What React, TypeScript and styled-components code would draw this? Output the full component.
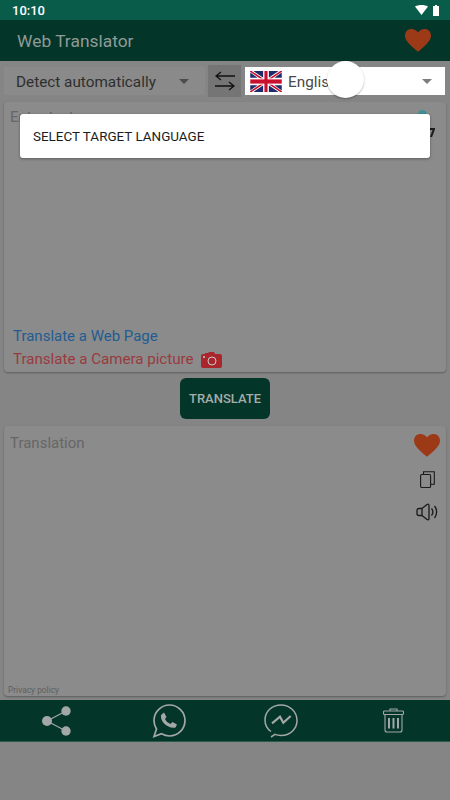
import React from 'react';
import styled, { createGlobalStyle } from 'styled-components';

const GlobalStyle = createGlobalStyle`
  html, body {
    margin: 0;
    padding: 0;
    background-color: #858585;
    font-family: Roboto, "Liberation Sans", sans-serif;
  }
`;

const Screen = styled.div`
  position: relative;
  width: 450px;
  height: 800px;
  overflow: hidden;
  display: flex;
  flex-direction: column;
  background-color: #858585;
`;

const StatusBar = styled.div`
  height: 20px;
  padding: 0 11px 0 12px;
  display: flex;
  justify-content: space-between;
  align-items: center;
  background-color: #0a5c4a;
  color: #fff;
  font-size: 13px;
  font-weight: 500;
`;

const StatusIcons = styled.div`
  display: flex;
  align-items: center;
  gap: 5px;
`;

const AppBar = styled.div`
  height: 41px;
  padding: 0 19px 0 17px;
  display: flex;
  justify-content: space-between;
  align-items: center;
  background-color: #033529;
  color: #8f9b97;
  font-size: 17.4px;
`;

const LanguageRow = styled.div`
  height: 28px;
  margin-top: 6px;
  padding: 0 4px;
  display: flex;
  align-items: center;
`;

const SourceSelect = styled.div`
  width: 201px;
  height: 28px;
  box-sizing: border-box;
  padding: 1px 16px 0 12px;
  display: flex;
  justify-content: space-between;
  align-items: center;
  background-color: #8a8a8a;
  color: #2f2f2f;
  font-size: 15.3px;
`;

const SwapButton = styled.div`
  width: 33px;
  height: 32px;
  margin-left: 3px;
  display: flex;
  justify-content: center;
  align-items: center;
  background-color: #757575;
`;

const TargetSelect = styled.div`
  width: 200px;
  height: 28px;
  margin-left: 4px;
  box-sizing: border-box;
  padding: 0 13px 0 5px;
  display: flex;
  align-items: center;
  background-color: #fff;
  color: #4a4a4a;
  font-size: 15.3px;
`;

const TargetName = styled.span`
  margin-left: 6px;
  padding-top: 1px;
  flex: 1;
`;

const Caret = styled.span<{ $color: string }>`
  width: 0;
  height: 0;
  border-left: 5px solid transparent;
  border-right: 5px solid transparent;
  border-top: 5px solid ${(props) => props.$color};
`;

const Card = styled.div<{ $height: number; $top: number }>`
  position: relative;
  height: ${(props) => props.$height}px;
  margin: ${(props) => props.$top}px 4px 0;
  border-radius: 4px;
  display: flex;
  flex-direction: column;
  background-color: #8b8b8b;
  box-shadow: 0 1px 2px rgba(0, 0, 0, 0.3);
`;

const Hint = styled.div<{ $top: number }>`
  padding: ${(props) => props.$top}px 6px 0;
  color: #666;
  font-size: 15px;
  line-height: 18px;
`;

const InputTools = styled.div`
  position: absolute;
  top: 8px;
  right: 11px;
  display: flex;
  flex-direction: column;
  align-items: flex-end;
  gap: 9px;
`;

const TealDot = styled.span`
  width: 9px;
  height: 9px;
  margin-right: 8px;
  border-radius: 50%;
  background-color: #3f8f97;
`;

const CardLinks = styled.div`
  margin-top: auto;
  padding: 0 9px 3px;
  display: flex;
  flex-direction: column;
  gap: 4px;
`;

const WebLink = styled.div`
  color: #235c91;
  font-size: 15px;
  line-height: 19px;
`;

const CameraLink = styled.div`
  display: flex;
  align-items: center;
  gap: 8px;
  color: #9a3a3f;
  font-size: 15.1px;
  line-height: 19px;
`;

const ButtonRow = styled.div`
  margin-top: 6px;
  display: flex;
  justify-content: center;
`;

const TranslateButton = styled.div`
  width: 90px;
  height: 41px;
  border-radius: 6px;
  display: flex;
  justify-content: center;
  align-items: center;
  background-color: #033529;
  color: #a3adaa;
  font-size: 13px;
  font-weight: 500;
`;

const ResultTools = styled.div`
  position: absolute;
  top: 8px;
  right: 6px;
  width: 26px;
  display: flex;
  flex-direction: column;
  align-items: center;
  gap: 14.5px;
`;

const Privacy = styled.div`
  margin-top: auto;
  padding: 0 4px;
  color: #5f5f5f;
  font-size: 8.4px;
  line-height: 11px;
`;

const BottomBar = styled.div`
  height: 41px;
  margin-top: 4px;
  display: grid;
  grid-template-columns: repeat(4, 112.5px);
  justify-items: center;
  align-items: center;
  background-color: #033529;
  border-bottom: 1px solid #2c5a4e;
`;

const Dialog = styled.div`
  position: absolute;
  top: 114px;
  left: 20px;
  width: 410px;
  height: 44px;
  box-sizing: border-box;
  padding: 1px 13px 0;
  border-radius: 3px;
  display: flex;
  align-items: center;
  background-color: #fff;
  color: #1c1c1c;
  font-size: 13.45px;
  box-shadow: 0 1px 3px rgba(0, 0, 0, 0.35);
`;

const TouchDot = styled.div`
  position: absolute;
  top: 61px;
  left: 327px;
  width: 37px;
  height: 37px;
  border-radius: 50%;
  background-color: #fff;
  box-shadow: 0 1px 2px rgba(0, 0, 0, 0.3);
`;

const Heart = ({ size }: { size: number }) => (
  <svg width={size} height={size * 0.88} viewBox="0 0 24 21">
    <path
      fill="#9c3a18"
      d="M12 21 C5 15 0 11 0 6 C0 2.500 2.700 0 6 0 C8.400 0 10.700 1.200 12 3.200 C13.300 1.200 15.600 0 18 0 C21.300 0 24 2.500 24 6 C24 11 19 15 12 21 Z"
    />
  </svg>
);

const FlagUK = () => (
  <svg width="32" height="21" viewBox="0 0 60 40">
    <rect width="60" height="40" fill="#fff" />
    <path fill="#1f2a6b" d="M0 3v10h14zM0 27v10l14-10zM60 3v10H46zM60 27v10L46 27zM6 0l19 13V0zM54 0L35 13V0zM6 40l19-13v13zM54 40L35 27v13z" />
    <path stroke="#c8102e" strokeWidth="3" d="M0 0l60 40M60 0L0 40" />
    <rect x="25" width="10" height="40" fill="#fff" />
    <rect y="14" width="60" height="12" fill="#fff" />
    <rect x="27" width="6" height="40" fill="#c8102e" />
    <rect y="16" width="60" height="8" fill="#c8102e" />
  </svg>
);

const App = () => {
  return (
    <Screen>
      <GlobalStyle />
      <StatusBar>
        <span>10:10</span>
        <StatusIcons>
          <svg width="13" height="10" viewBox="0 0 13 10">
            <path fill="#fff" d="M0 1.500 C3.500 -0.500 9.500 -0.500 13 1.500 L6.500 10 Z" />
          </svg>
          <svg width="6" height="11" viewBox="0 0 6 11">
            <path fill="#fff" d="M2 0h2v1h2v10H0V1h2z" />
          </svg>
        </StatusIcons>
      </StatusBar>
      <AppBar>
        <span>Web Translator</span>
        <Heart size={26} />
      </AppBar>

      <LanguageRow>
        <SourceSelect>
          Detect automatically
          <Caret $color="#4c4c4c" />
        </SourceSelect>
        <SwapButton>
          <svg width="20" height="20" viewBox="0 0 20 20" fill="none" stroke="#111" strokeWidth="1.4">
            <path d="M20 5H1M6 1L1 5l5 4" />
            <path d="M0 15h19M14 11l5 4-5 4" />
          </svg>
        </SwapButton>
        <TargetSelect>
          <FlagUK />
          <TargetName>English</TargetName>
          <Caret $color="#7d7d7d" />
        </TargetSelect>
      </LanguageRow>

      <Card $height={270} $top={7}>
        <Hint $top={6}>Enter text</Hint>
        <InputTools>
          <TealDot />
          <svg width="9" height="9" viewBox="0 0 9 9" fill="none" stroke="#1a1a1a" strokeWidth="2">
            <path d="M0 1h8L5 9" />
          </svg>
        </InputTools>
        <CardLinks>
          <WebLink>Translate a Web Page</WebLink>
          <CameraLink>
            Translate a Camera picture
            <svg width="21" height="16" viewBox="0 0 21 16">
              <path fill="#a9272c" d="M2 2h2V1h3l1-1h5l1 2h5a2 2 0 0 1 2 2v10a2 2 0 0 1-2 2H2a2 2 0 0 1-2-2V4a2 2 0 0 1 2-2z" />
              <circle cx="11" cy="9" r="4" fill="none" stroke="#c9c9c9" strokeWidth="1" />
              <circle cx="3" cy="5" r="1" fill="#c9c9c9" />
            </svg>
          </CameraLink>
        </CardLinks>
      </Card>

      <ButtonRow>
        <TranslateButton>TRANSLATE</TranslateButton>
      </ButtonRow>

      <Card $height={270} $top={7}>
        <Hint $top={8}>Translation</Hint>
        <ResultTools>
          <Heart size={26} />
          <svg width="15" height="17" viewBox="0 0 15 17" fill="none" stroke="#1a1a1a" strokeWidth="1.1">
            <rect x="0.6" y="3.500" width="10" height="13" rx="1.200" />
            <path d="M3.500 3.500V0.800h10.800v12.500h-3.700" />
          </svg>
          <svg width="23" height="18" viewBox="0 0 23 18" fill="none" stroke="#1a1a1a" strokeWidth="1.3">
            <path d="M6 5.500H3a2 2 0 0 0-2 2v3a2 2 0 0 0 2 2h3" />
            <path d="M6 5.500L11 1.500c1-.7 2-.3 2 1v13c0 1.300-1 1.700-2 1l-5-4z" />
            <path d="M15.500 5.500c1.600 2 1.600 5 0 7M18.500 3c2.800 3.500 2.800 8.500 0 12" />
          </svg>
        </ResultTools>
        <Privacy>Privacy policy</Privacy>
      </Card>

      <BottomBar>
        <svg width="29" height="30" viewBox="0 0 29 30">
          <path stroke="#a3a8a6" strokeWidth="1.2" d="M5 15L24 5M5 15l19 10" />
          <circle cx="5" cy="15" r="5" fill="#a3a8a6" />
          <circle cx="24" cy="5" r="4.700" fill="#a3a8a6" />
          <circle cx="24" cy="25" r="4.700" fill="#a3a8a6" />
        </svg>
        <svg width="34" height="34" viewBox="0 0 34 34">
          <path
            fill="none"
            stroke="#a3a8a6"
            strokeWidth="1.700"
            d="M2 32.500L4.500 25C3 22.500 2 19.800 2 16.500 2 8 9 1 17.500 1S33 8 33 16.500 26 32 17.500 32c-3 0-5.500-.8-8-2.200z"
          />
          <path
            fill="#a3a8a6"
            d="M9 11L12 8.500L14.500 13L13 15C14 17 16 19 18.500 20L20.500 18L25 20.500L23.500 23.500C16 25 8 18 9 11Z"
          />
        </svg>
        <svg width="34" height="34" viewBox="0 0 34 34" fill="none" stroke="#a3a8a6" strokeWidth="1.500">
          <path d="M7 33l4-2.600c2 .8 3.800 1.100 6 1.100 9 0 16-6.500 16-15S26 1 17 1 1 7.500 1 16c0 4.800 2 8.800 6 11.500" />
          <path strokeWidth="2.200" d="M8 19.300L16 12.700L19.300 18.700L26.700 12" />
        </svg>
        <svg width="21" height="25" viewBox="0 0 21 25" fill="none" stroke="#a3a8a6" strokeWidth="1.100">
          <path d="M7 3V1h7v2" />
          <rect x="0.500" y="3" width="20" height="3.500" rx="1" />
          <path d="M2 6.500V22a2 2 0 0 0 2 2h13a2 2 0 0 0 2-2V6.500" />
          <path strokeWidth="2" d="M6 10v10.500M10.500 10v10.500M15 10v10.500" />
        </svg>
      </BottomBar>

      <Dialog>SELECT TARGET LANGUAGE</Dialog>
      <TouchDot />
    </Screen>
  );
};

export default App;
